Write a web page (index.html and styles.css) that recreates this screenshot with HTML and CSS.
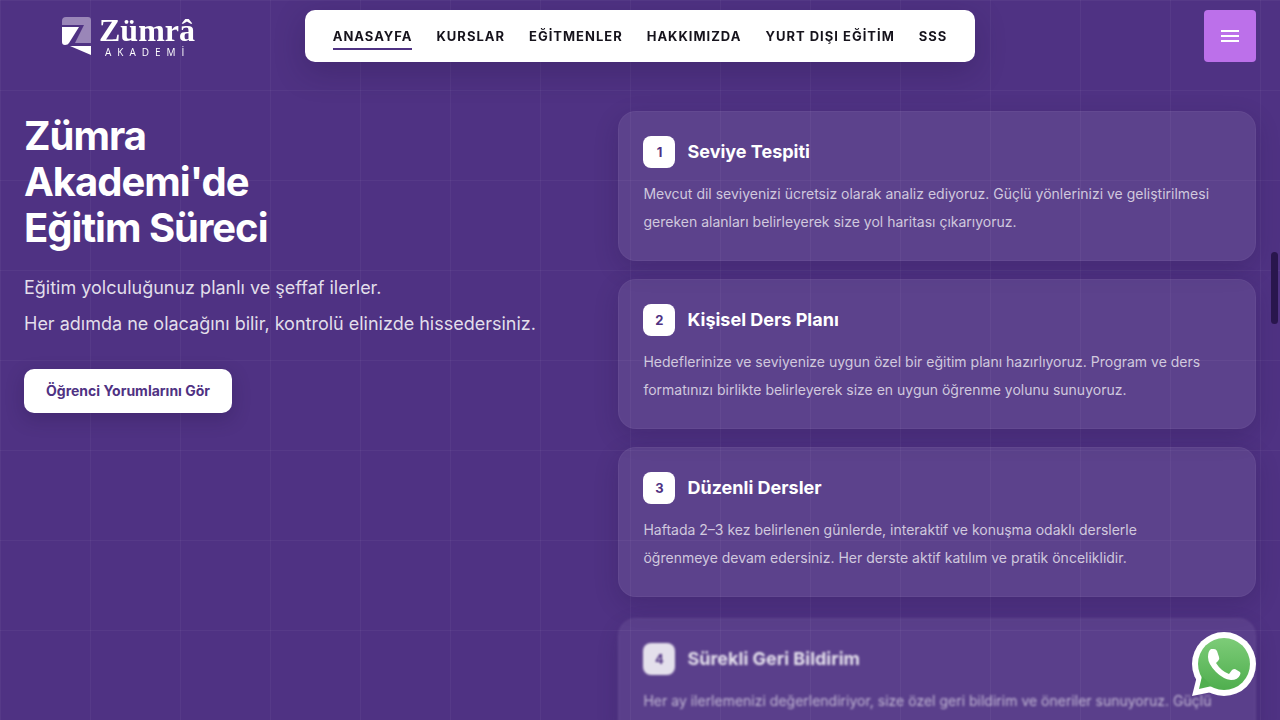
FILE: index.html
```html
<!DOCTYPE html>
<html lang="tr">
<head>
    <meta charset="UTF-8">
    <meta name="viewport" content="width=device-width, initial-scale=1.0">
    <title>Zümrâ Akademi - Eğitim Süreci</title>
    <link rel="stylesheet" href="styles.css">
</head>
<body>
    <header class="header">
        <a href="#" class="logo">
            <svg class="logo-mark" viewBox="0 0 30 38" aria-hidden="true">
                <path d="M4 0H26Q29 0 29 3V26H13L22 8H0V4Q0 0 4 0Z" fill="#9a86b8"/>
                <path d="M0 10H17L7 26Q6 28 3 28Q0 28 0 25Z" fill="#fff"/>
                <path d="M8 29H29V38Z" fill="#fff"/>
            </svg>
            <span class="logo-text">
                <span class="logo-name">Zümrâ</span>
                <span class="logo-sub">AKADEMİ</span>
            </span>
        </a>

        <nav class="navbar">
            <a href="#" class="nav-link active">ANASAYFA</a>
            <a href="#" class="nav-link">KURSLAR</a>
            <a href="#" class="nav-link">EĞİTMENLER</a>
            <a href="#" class="nav-link">HAKKIMIZDA</a>
            <a href="#" class="nav-link">YURT DIŞI EĞİTİM</a>
            <a href="#" class="nav-link">SSS</a>
        </nav>

        <button class="menu-button" type="button" aria-label="Menü">
            <span></span>
            <span></span>
            <span></span>
        </button>
    </header>

    <main class="process">
        <div class="intro">
            <h1>Zümra<br>Akademi'de<br>Eğitim Süreci</h1>
            <p>Eğitim yolculuğunuz planlı ve şeffaf ilerler.<br>Her adımda ne olacağını bilir, kontrolü elinizde hissedersiniz.</p>
            <a href="#" class="cta">Öğrenci Yorumlarını Gör</a>
        </div>

        <div class="steps">
            <article class="step">
                <div class="step-head">
                    <span class="step-number">1</span>
                    <h2>Seviye Tespiti</h2>
                </div>
                <p>Mevcut dil seviyenizi ücretsiz olarak analiz ediyoruz. Güçlü yönlerinizi ve geliştirilmesi gereken alanları belirleyerek size yol haritası çıkarıyoruz.</p>
            </article>
            <article class="step">
                <div class="step-head">
                    <span class="step-number">2</span>
                    <h2>Kişisel Ders Planı</h2>
                </div>
                <p>Hedeflerinize ve seviyenize uygun özel bir eğitim planı hazırlıyoruz. Program ve ders formatınızı birlikte belirleyerek size en uygun öğrenme yolunu sunuyoruz.</p>
            </article>
            <article class="step">
                <div class="step-head">
                    <span class="step-number">3</span>
                    <h2>Düzenli Dersler</h2>
                </div>
                <p>Haftada 2–3 kez belirlenen günlerde, interaktif ve konuşma odaklı derslerle<br>öğrenmeye devam edersiniz. Her derste aktif katılım ve pratik önceliklidir.</p>
            </article>
            <article class="step entering">
                <div class="step-head">
                    <span class="step-number">4</span>
                    <h2>Sürekli Geri Bildirim</h2>
                </div>
                <p>Her ay ilerlemenizi değerlendiriyor, size özel geri bildirim ve öneriler sunuyoruz. Güçlü</p>
            </article>
        </div>
    </main>

    <a href="#" class="whatsapp" aria-label="WhatsApp">
        <svg viewBox="0 0 64 64" aria-hidden="true">
            <defs>
                <linearGradient id="green" x1="0" y1="0" x2="0" y2="1">
                    <stop offset="0" stop-color="#7dcc78"/>
                    <stop offset="1" stop-color="#4fae4e"/>
                </linearGradient>
            </defs>
            <circle cx="32" cy="32" r="32" fill="#fff"/>
            <path d="M0 64L5 44L20 60Z" fill="#fff"/>
            <circle cx="32" cy="32" r="26" fill="url(#green)"/>
            <path d="M7 57L10 44L20 54Z" fill="#50af4f"/>
            <path d="M19 17H22Q24 17 25 19L27 25Q28 27 26 29L24 31Q29 39 37 42L40 38Q41 37 43 37L48 40Q49 41 48 43Q46 48 39 48Q31 47 24 40Q16 32 16 25Q16 19 19 17Z" fill="#fff"/>
        </svg>
    </a>
    <div class="scroll-thumb"></div>
</body>
</html>
```

FILE: styles.css
```css
* {
    margin: 0;
    padding: 0;
    box-sizing: border-box;
}

html {
    scrollbar-width: none;
}

body {
    font-family: Inter, "Liberation Sans", sans-serif;
    color: #fff;
    height: 100vh;
    overflow: hidden;
    background-color: #4f3283;
    background-image:
        linear-gradient(to right, rgba(255, 255, 255, 0.04) 1px, transparent 1px),
        linear-gradient(to bottom, rgba(255, 255, 255, 0.04) 1px, transparent 1px);
    background-size: 90px 90px;
}

a {
    text-decoration: none;
}

.header {
    position: fixed;
    top: 0;
    left: 0;
    right: 0;
    z-index: 10;
    display: grid;
    grid-template-columns: 1fr auto 1fr;
    align-items: center;
    padding: 10px 24px;
}

.logo {
    display: flex;
    align-items: center;
    gap: 7px;
    padding-left: 38px;
    color: #fff;
}

.logo-mark {
    width: 30px;
    height: 38px;
}

.logo-text {
    display: flex;
    flex-direction: column;
}

.logo-name {
    font-family: "Liberation Serif", serif;
    font-size: 32px;
    font-weight: bold;
    line-height: 32px;
}

.logo-sub {
    padding-left: 6px;
    font-family: "Open Sans", sans-serif;
    font-size: 10px;
    font-weight: 400;
    letter-spacing: 6px;
    line-height: 12px;
}

.navbar {
    display: flex;
    align-items: center;
    gap: 24px;
    height: 52px;
    padding: 0 28px;
    background: #fff;
    border-radius: 10px;
    box-shadow: 0 10px 30px rgba(30, 15, 60, 0.25);
}

.nav-link {
    padding: 5px 0 3px;
    border-bottom: 2px solid transparent;
    color: #16131c;
    font-size: 13px;
    font-weight: 700;
    letter-spacing: 1px;
    line-height: 18px;
}

.nav-link.active {
    border-color: #4f3283;
}

.menu-button {
    justify-self: end;
    display: flex;
    flex-direction: column;
    align-items: center;
    justify-content: center;
    gap: 3px;
    width: 52px;
    height: 52px;
    border: none;
    border-radius: 4px;
    background: #bc70ea;
    cursor: pointer;
}

.menu-button span {
    width: 18px;
    height: 2px;
    background: #fff;
}

.process {
    display: grid;
    grid-template-columns: 6fr 7fr;
    align-items: start;
    gap: 48px;
    padding: 111px 24px 0;
}

.intro {
    padding-top: 2px;
}

.intro h1 {
    font-size: 40px;
    font-weight: 700;
    letter-spacing: -1px;
    line-height: 46px;
}

.intro p {
    margin-top: 19px;
    color: rgba(255, 255, 255, 0.85);
    font-size: 18px;
    line-height: 36px;
}

.cta {
    display: inline-block;
    margin-top: 27px;
    padding: 12px 22px;
    background: #fff;
    border-radius: 10px;
    box-shadow: 0 6px 18px rgba(30, 15, 60, 0.25);
    color: #4f3283;
    font-size: 14px;
    font-weight: 700;
    line-height: 20px;
}

.steps {
    display: grid;
    gap: 18px;
}

.step {
    padding: 24px;
    background: rgba(255, 255, 255, 0.08);
    border: 1px solid rgba(255, 255, 255, 0.04);
    border-radius: 18px;
    box-shadow: 0 8px 24px rgba(30, 15, 60, 0.2);
}

.step-head {
    display: flex;
    align-items: center;
    gap: 12px;
    margin-bottom: 12px;
}

.step-number {
    display: flex;
    align-items: center;
    justify-content: center;
    width: 32px;
    height: 32px;
    background: #fff;
    border-radius: 8px;
    color: #4f3283;
    font-size: 13px;
    font-weight: 700;
}

.step h2 {
    font-size: 18px;
    font-weight: 700;
    line-height: 28px;
}

.step p {
    color: rgba(255, 255, 255, 0.72);
    font-size: 14px;
    line-height: 28px;
}

/* last card is still fading in */
.step.entering {
    opacity: 0.85;
    filter: blur(1px);
    transform: translateY(3px);
}

.whatsapp {
    position: fixed;
    right: 24px;
    bottom: 24px;
    z-index: 20;
    width: 64px;
    height: 64px;
}

.whatsapp svg {
    display: block;
}

.scroll-thumb {
    position: fixed;
    top: 35vh;
    right: 2px;
    z-index: 30;
    width: 7px;
    height: 10vh;
    border-radius: 4px;
    background: #29164d;
}
```
